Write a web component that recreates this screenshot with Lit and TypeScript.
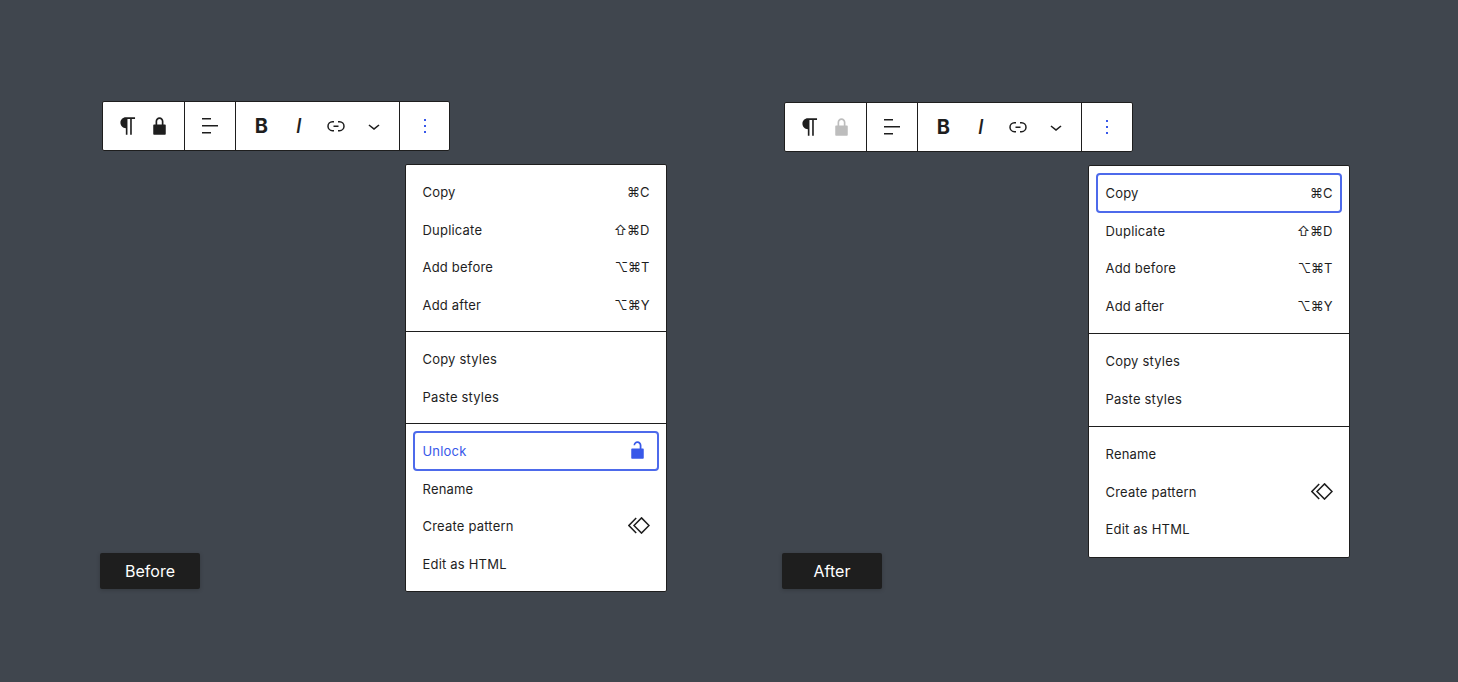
import { LitElement, html, css, svg } from "lit";
import { customElement, property } from "lit/decorators.js";

const icon = (d: string, size = 24) => html`<svg class="ic" width=${size} height=${size} viewBox="0 0 24 24" fill="currentColor" aria-hidden="true">${svg`<path d=${d}></path>`}</svg>`;

const PARA = "m9.99609 14v-.2251l.00391.0001v6.225h1.5v-14.5h2.5v14.5h1.5v-14.5h3v-1.5h-8.50391c-2.76142 0-5 2.23858-5 5 0 2.7614 2.23858 5 5 5z";
const LOCK = "M17 10h-1.2V7c0-2.1-1.7-3.8-3.8-3.8-2.1 0-3.8 1.7-3.8 3.8v3H7c-.6 0-1 .4-1 1v8c0 .6.4 1 1 1h10c.6 0 1-.4 1-1v-8c0-.6-.4-1-1-1zm-2.8 0H9.8V7c0-1.2 1-2.2 2.2-2.2s2.2 1 2.2 2.2v3z";
const UNLOCK = "M17 10h-1.2V7c0-2.1-1.7-3.8-3.8-3.8-2.1 0-3.8 1.7-3.8 3.8h1.5c0-1.2 1-2.2 2.2-2.2s2.2 1 2.2 2.2v3H7c-.6 0-1 .4-1 1v8c0 .6.4 1 1 1h10c.6 0 1-.4 1-1v-8c0-.6-.4-1-1-1z";
const ALIGN = "M13 5.5H4V4h9v1.5Zm7 7H4V11h16v1.5Zm-7 7H4V18h9v1.5Z";
const LINK = "M10 17.389H8.444A5.194 5.194 0 1 1 8.444 7H10v1.5H8.444a3.694 3.694 0 0 0 0 7.389H10v1.5ZM14 7h1.556a5.194 5.194 0 0 1 0 10.39H14v-1.5h1.556a3.694 3.694 0 0 0 0-7.39H14V7Zm-4.5 6h5v-1.5h-5V13Z";
const CHEV = "M17.5 11.6L12 16l-5.5-4.4.9-1.2L12 14l4.5-3.6 1 1.2z";
const MORE = "M13 19h-2v-2h2v2zm0-6h-2v-2h2v2zm0-6h-2V5h2v2z";

const patternIcon = html`<svg class="pat" width="22" height="17" viewBox="0 0 22 17" fill="none" stroke="currentColor" stroke-width="1.5" aria-hidden="true">
  <path d="M13.5 .9 L21 8.5 L13.5 16.1 L6 8.5 Z"></path>
  <path d="M8.2 .9 L.9 8.5 L8.2 16.1"></path>
</svg>`;

type Row = { label: string; key?: string; icon?: "unlock" | "pattern"; focus?: boolean; accent?: boolean };

@customElement("block-panel")
class BlockPanel extends LitElement {
  @property() variant = "before";

  static styles = css`
    :host { display: block; flex: none; width: 682px; }
    .panel { display: grid; grid-template-columns: 305px 262px; grid-template-rows: auto 1fr; height: 490.5px; box-sizing: border-box; }
    .panel.after { padding-top: 1px; grid-template-columns: 306px 262px; }
    .toolbar { grid-column: 1 / -1; justify-self: start; width: 348px; margin-left: 2px; display: flex; height: 50px; box-sizing: border-box; background: #fff; border: 1px solid #1e1e1e; border-radius: 2px; color: #1e1e1e; }
    .after .toolbar { width: 349px; }
    .group { display: flex; align-items: center; border-right: 1px solid #1e1e1e; box-sizing: border-box; }
    .group:last-child { border-right: 0; }
    .g1 { width: 82px; padding-left: 9px; }
    .g1 .btn { width: 32px; }
    .g1 .btn + .btn { width: 30px; }
    .g2 { width: 51px; }
    .g2 .btn { width: 49px; }
    .g3 { width: 164px; padding-left: 6.5px; }
    .g3 .btn { width: 37.5px; }
    .g4 { flex: 1; justify-content: center; }
    .btn { display: flex; align-items: center; justify-content: center; height: 100%; }
    .ic { display: block; flex: none; }
    .bold { font: 700 20px/1 Inter, sans-serif; }
    .ital { font: italic 500 20px/1 Inter, sans-serif; }
    .muted { color: #bdbdbd; }
    .blue { color: #3858e9; }
    .menu { grid-column: 2; grid-row: 2; align-self: start; margin-top: 13px; background: #fff; border: 1px solid #1e1e1e; border-radius: 2px; box-sizing: border-box; width: 262px; font: 400 13px/1 Inter, sans-serif; color: #1e1e1e; }
    .sec { padding: 8px 0; border-top: 1px solid #1e1e1e; }
    .sec:last-child { padding-bottom: 8.5px; }
    .after .sec { padding: 8.5px 0; }
    .sec:first-child { border-top: 0; }
    .row { position: relative; display: flex; align-items: center; justify-content: space-between; height: 37.5px; padding: 0 16.5px; box-sizing: border-box; letter-spacing: .2px; }
    .txt { padding-top: 2px; }
    .after .txt { padding-top: 1px; }
    .row.focus::after { content: ""; position: absolute; left: 7px; right: 7px; top: -1.25px; bottom: -1.25px; border: 2px solid #4d6aeb; border-radius: 4px; box-sizing: border-box; }
    .row.accent { color: #3858e9; }
    .key { font-family: Inter, "DejaVu Sans", sans-serif; letter-spacing: 0; white-space: nowrap; }
    .label { grid-column: 1; grid-row: 2; align-self: end; justify-self: start; width: 100px; height: 36px; margin-bottom: 2.5px; display: flex; align-items: center; justify-content: center; background: #1e1e1e; color: #fff; border-radius: 2px; font: 400 16px/1 Inter, sans-serif; box-shadow: 0 1px 4px rgba(0,0,0,.2); }
  `;

  private row(r: Row) {
    return html`<div class="row ${r.focus ? "focus" : ""} ${r.accent ? "accent" : ""}">
      <span class="txt">${r.label}</span>
      ${r.key ? html`<span class="txt key">${r.key}</span>` : ""}
      ${r.icon === "unlock" ? icon(UNLOCK, 25) : ""}
      ${r.icon === "pattern" ? patternIcon : ""}
    </div>`;
  }

  render() {
    const before = this.variant === "before";
    const s1: Row[] = [
      { label: "Copy", key: "⌘C", focus: !before },
      { label: "Duplicate", key: "⇧⌘D" },
      { label: "Add before", key: "⌥⌘T" },
      { label: "Add after", key: "⌥⌘Y" },
    ];
    const s2: Row[] = [{ label: "Copy styles" }, { label: "Paste styles" }];
    const s3: Row[] = [
      ...(before ? [{ label: "Unlock", icon: "unlock", focus: true, accent: true } as Row] : []),
      { label: "Rename" },
      { label: "Create pattern", icon: "pattern" },
      { label: "Edit as HTML" },
    ];
    return html`<div class="panel ${this.variant}">
      <div class="toolbar">
        <div class="group g1">
          <div class="btn">${icon(PARA, 26)}</div>
          <div class="btn ${before ? "" : "muted"}">${icon(LOCK, 25)}</div>
        </div>
        <div class="group g2"><div class="btn">${icon(ALIGN)}</div></div>
        <div class="group g3">
          <div class="btn bold">B</div>
          <div class="btn ital">I</div>
          <div class="btn">${icon(LINK)}</div>
          <div class="btn">${icon(CHEV)}</div>
        </div>
        <div class="group g4"><div class="btn blue">${icon(MORE)}</div></div>
      </div>
      <div class="label">${before ? "Before" : "After"}</div>
      <div class="menu">
        <div class="sec">${s1.map((r) => this.row(r))}</div>
        <div class="sec">${s2.map((r) => this.row(r))}</div>
        <div class="sec">${s3.map((r) => this.row(r))}</div>
      </div>
    </div>`;
  }
}

@customElement("app-root")
export class AppRoot extends LitElement {
  static styles = css`
    :host { display: block; width: 1458px; height: 682px; background: #40464e; overflow: hidden; }
    .page { display: flex; box-sizing: border-box; height: 100%; padding: 101px 0 0 100px; }
  `;
  render() {
    return html`<div class="page">
      <block-panel variant="before"></block-panel>
      <block-panel variant="after"></block-panel>
    </div>`;
  }
}
